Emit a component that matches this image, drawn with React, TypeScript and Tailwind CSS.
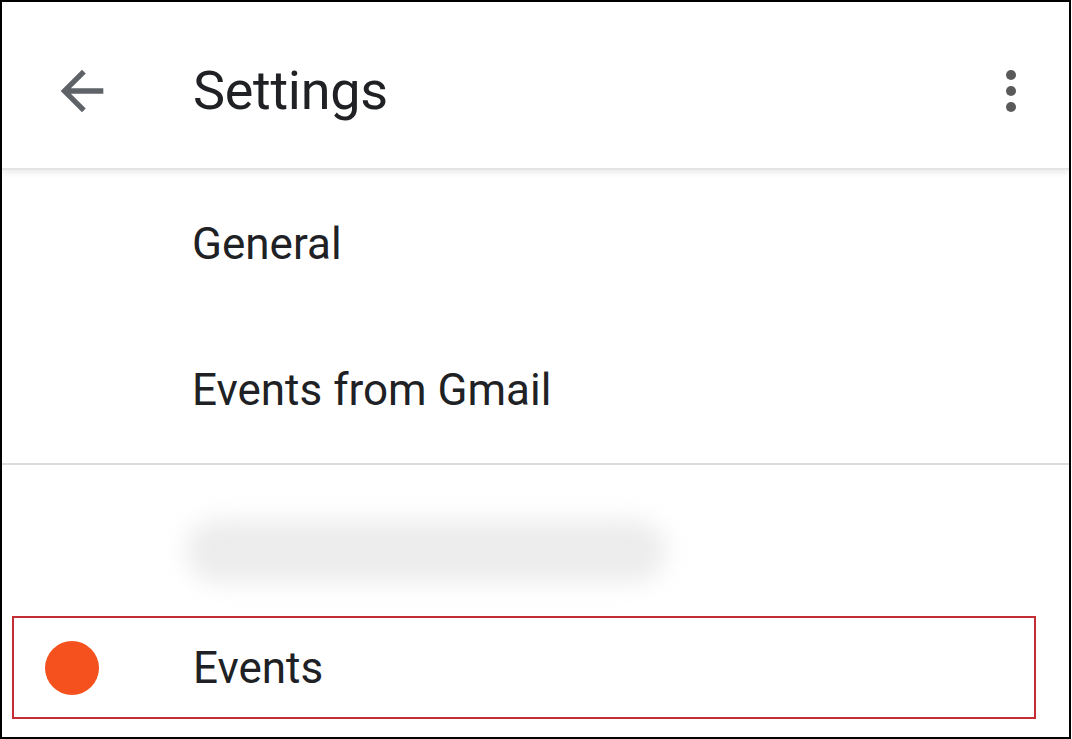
import React from "react";

const font = { fontFamily: "Roboto, 'Noto Sans', sans-serif" };

function BackArrow() {
  return (
    <svg viewBox="0 0 24 24" className="w-[64px] h-[64px]" fill="#5f6368">
      <path d="M20 11H7.83l5.59-5.59L12 4l-8 8 8 8 1.41-1.41L7.83 13H20v-2z" />
    </svg>
  );
}

function Kebab() {
  return (
    <div className="flex flex-col items-center gap-[6px]">
      <span className="w-[10px] h-[10px] rounded-full bg-[#5a5a5a]" />
      <span className="w-[10px] h-[10px] rounded-full bg-[#5a5a5a]" />
      <span className="w-[10px] h-[10px] rounded-full bg-[#5a5a5a]" />
    </div>
  );
}

export default function App() {
  return (
    <div
      className="w-[1071px] h-[739px] border-2 border-black bg-white flex flex-col overflow-hidden text-[#202124]"
      style={font}
    >
      {/* top bar */}
      <header className="relative z-10 h-[168px] shrink-0 flex items-center pt-[12px] border-b-2 border-[#e4e4e4] shadow-[0_3px_6px_rgba(0,0,0,0.08)]">
        <div className="w-[191px] pl-[48px] shrink-0 flex items-center">
          <BackArrow />
        </div>
        <h1 className="flex-1 text-[54px] leading-[64px] font-normal tracking-[-0.3px]">Settings</h1>
        <div className="w-[56px] mr-[30px] flex justify-center">
          <Kebab />
        </div>
      </header>

      {/* account section */}
      <div className="h-[147px] shrink-0 flex items-center pl-[190px]">
        <span className="text-[44px] leading-[52px]">General</span>
      </div>
      <div className="h-[146px] shrink-0 flex items-center pl-[190px]">
        <span className="text-[44px] leading-[52px]">Events from Gmail</span>
      </div>
      <div className="h-[2px] shrink-0 bg-[#dcdcdc]" />

      {/* blurred account row */}
      <div className="h-[151px] shrink-0 flex items-center pl-[184px] pt-[20px]">
        <div className="w-[480px] h-[62px] rounded-full bg-[#ececec] blur-[12px]" />
      </div>

      {/* highlighted calendar */}
      <div className="h-[103px] shrink-0 ml-[10px] mr-[33px] border-2 border-[#c42c36] flex items-center">
        <div className="w-[179px] pl-[31px] shrink-0 flex items-center">
          <span className="w-[54px] h-[54px] rounded-full bg-[#f4511e]" />
        </div>
        <span className="text-[44px] leading-[52px]">Events</span>
      </div>
    </div>
  );
}
